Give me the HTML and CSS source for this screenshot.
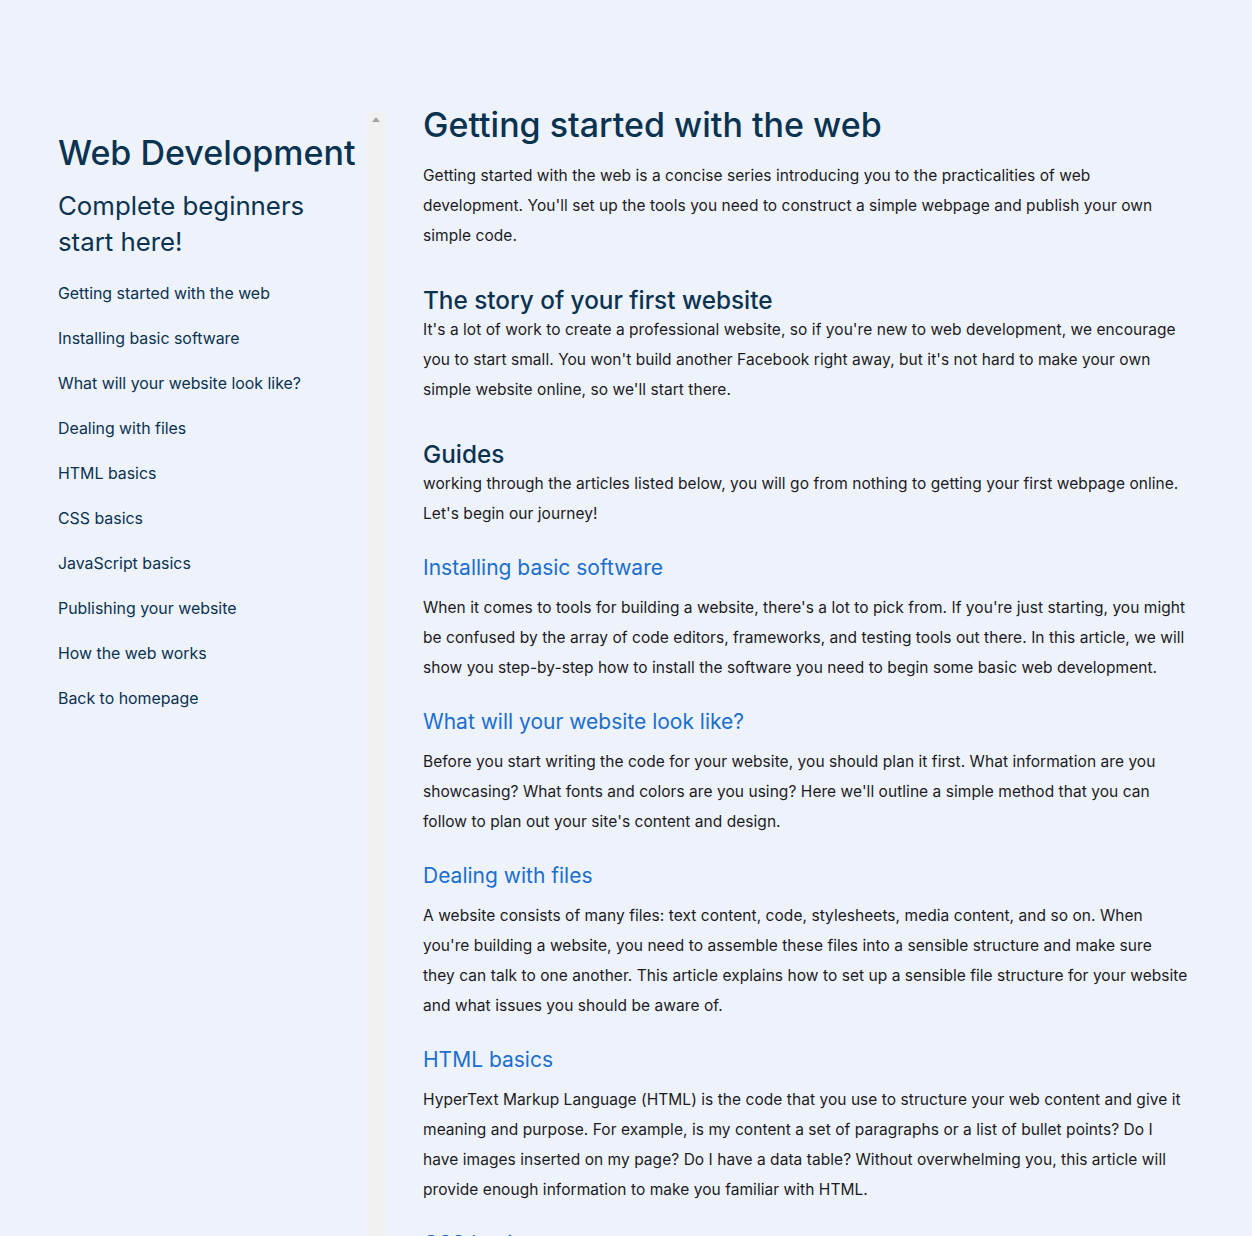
FILE: index.html
```html
<!DOCTYPE html>
<html lang="en">
<head>
<meta charset="utf-8">
<title>Getting started with the web</title>
<link rel="stylesheet" href="styles.css">
</head>
<body>
<div class="layout">
  <aside class="sidebar">
    <div class="side-content">
      <h2 class="side-title">Web Development</h2>
      <h3 class="side-sub">Complete beginners start here!</h3>
      <ul class="side-nav">
        <li><a href="#">Getting started with the web</a></li>
        <li><a href="#">Installing basic software</a></li>
        <li><a href="#">What will your website look like?</a></li>
        <li><a href="#">Dealing with files</a></li>
        <li><a href="#">HTML basics</a></li>
        <li><a href="#">CSS basics</a></li>
        <li><a href="#">JavaScript basics</a></li>
        <li><a href="#">Publishing your website</a></li>
        <li><a href="#">How the web works</a></li>
        <li><a href="#">Back to homepage</a></li>
      </ul>
    </div>
    <div class="track"><span class="arrow"></span></div>
  </aside>
  <main class="main">
    <h1 class="title">Getting started with the web</h1>
    <p class="lead">Getting started with the web is a concise series introducing you to the practicalities of web development. You'll set up the tools you need to construct a simple webpage and publish your own simple code.</p>
    <h2 class="section">The story of your first website</h2>
    <p>It's a lot of work to create a professional website, so if you're new to web development, we encourage you to start small. You won't build another Facebook right away, but it's not hard to make your own simple website online, so we'll start there.</p>
    <h2 class="section">Guides</h2>
    <p>working through the articles listed below, you will go from nothing to getting your first webpage online. Let's begin our journey!</p>
    <h3 class="guide"><a href="#">Installing basic software</a></h3>
    <p>When it comes to tools for building a website, there's a lot to pick from. If you're just starting, you might be confused by the array of code editors, frameworks, and testing tools out there. In this article, we will show you step-by-step how to install the software you need to begin some basic web development.</p>
    <h3 class="guide"><a href="#">What will your website look like?</a></h3>
    <p>Before you start writing the code for your website, you should plan it first. What information are you showcasing? What fonts and colors are you using? Here we'll outline a simple method that you can follow to plan out your site's content and design.</p>
    <h3 class="guide"><a href="#">Dealing with files</a></h3>
    <p>A website consists of many files: text content, code, stylesheets, media content, and so on. When you're building a website, you need to assemble these files into a sensible structure and make sure they can talk to one another. This article explains how to set up a sensible file structure for your website and what issues you should be aware of.</p>
    <h3 class="guide"><a href="#">HTML basics</a></h3>
    <p>HyperText Markup Language (HTML) is the code that you use to structure your web content and give it meaning and purpose. For example, is my content a set of paragraphs or a list of bullet points? Do I have images inserted on my page? Do I have a data table? Without overwhelming you, this article will provide enough information to make you familiar with HTML.</p>
    <h3 class="guide"><a href="#">CSS basics</a></h3>
    <p>CSS (Cascading Style Sheets) is the code that you use to style your website. For example, do you want the text to be black or red? Where should content be drawn on the screen? What background images and colors should be used to decorate your website?</p>
  </main>
</div>
</body>
</html>
```
FILE: styles.css
```css
* { box-sizing: border-box; }
html, body { margin: 0; padding: 0; }
body {
  background: #eef2fa;
  font-family: Inter, "Noto Sans", sans-serif;
  color: #1b1b24;
  height: 1236px;
  overflow: hidden;
}
.layout {
  display: grid;
  grid-template-columns: 327px 1fr;
  column-gap: 38px;
  padding: 105px 57px 0 58px;
}
.sidebar {
  margin-top: 7px;
  height: 1200px;
  display: flex;
}
.side-content {
  flex: 1;
  padding-top: 21px;
}
.side-title {
  margin: 0;
  font-size: 34px;
  line-height: 40px;
  font-weight: 500;
  color: #0a3352;
}
.side-sub {
  margin: 15px 0 0;
  font-size: 25.8px;
  line-height: 36px;
  font-weight: 400;
  color: #0a3352;
  max-width: 270px;
}
.side-nav {
  list-style: none;
  margin: 11px 0 0;
  padding: 0;
}
.side-nav li {
  height: 45px;
  display: flex;
  align-items: center;
  font-size: 15.9px;
}
.side-nav a {
  color: #0a3352;
  text-decoration: none;
}
.track {
  width: 19px;
  background: #f1f1f1;
  display: flex;
  justify-content: center;
  padding-top: 5px;
}
.arrow {
  width: 0;
  height: 0;
  border-left: 4.5px solid transparent;
  border-right: 4.5px solid transparent;
  border-bottom: 5px solid #a3a3a3;
}
.main {
  max-width: 765px;
}
.title {
  margin: 0 0 16px;
  font-size: 34px;
  line-height: 40px;
  font-weight: 500;
  color: #0a3352;
}
.main p {
  margin: 0;
  font-size: 15.5px;
  letter-spacing: 0.05px;
  line-height: 30px;
}
.section {
  margin: 34px 0 0;
  font-size: 24.3px;
  line-height: 30px;
  font-weight: 500;
  color: #0a3352;
}
.guide {
  margin: 24px 0 10px;
  font-size: 21px;
  line-height: 30px;
  font-weight: 400;
}
.guide a {
  color: #1a6fcf;
  text-decoration: none;
}
```
